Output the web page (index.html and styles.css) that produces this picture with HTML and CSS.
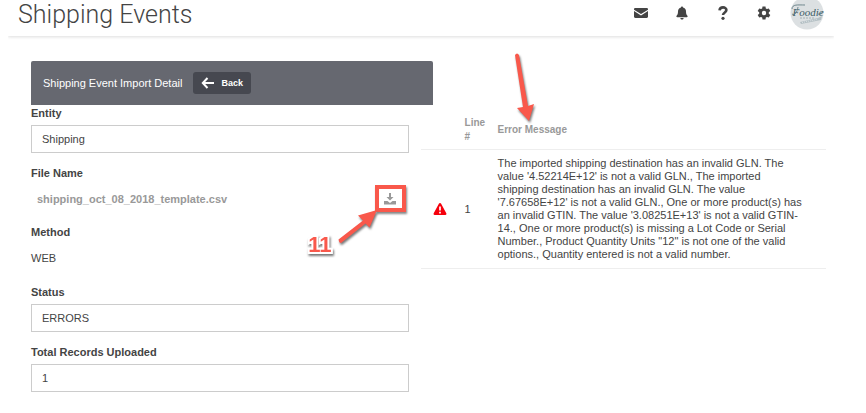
FILE: index.html
```html
<!DOCTYPE html>
<html lang="en">
  <head>
    <meta charset="UTF-8">
    <title>Shipping Events</title>
    <link rel="stylesheet" href="styles.css">
  </head>
  <body>
    <header class="topbar">
      <h1>Shipping Events</h1>
      <nav class="tools">
        <a href="#messages" aria-label="Messages">
          <svg width="14" height="14" viewBox="0 0 14 14"><path d="M1.4 2h11.2C13.4 2 14 2.5 14 3.2v.5L7 8.1 0 3.7v-.5C0 2.5.6 2 1.4 2zM0 5.1l7 4.4 7-4.4v5.700c0 .7-.6 1.2-1.4 1.2H1.400C.6 12 0 11.500 0 10.800z"/></svg>
        </a>
        <a href="#alerts" aria-label="Alerts">
          <svg width="14" height="14" viewBox="0 0 14 14"><path d="M7 .5c.6 0 1 .4 1 1 2 .5 3 2 3 4 0 2.400.6 3.400 1.400 4.200.5.600.2 1.500-.7 1.500H2.300c-.9 0-1.200-.9-.7-1.500C2.400 8.900 3 7.900 3 5.500c0-2 1-3.500 3-4 0-.6.4-1 1-1zM5.400 12h3.200c0 .9-.7 1.600-1.600 1.600S5.400 12.900 5.400 12z"/></svg>
        </a>
        <a href="#help" aria-label="Help">
          <svg width="14" height="14" viewBox="0 0 14 14"><path d="M3.500 4.400C3.800 2.200 5 1.400 7 1.400c2 0 3.400 1.100 3.400 2.700 0 2.400-3.200 2.300-3.400 4.900" fill="none" stroke="#444" stroke-width="2.600"/><circle cx="7" cy="12.300" r="1.600"/></svg>
        </a>
        <a href="#settings" aria-label="Settings">
          <svg width="14" height="14" viewBox="0 0 14 14"><path fill-rule="evenodd" d="M5.500.5h3l.3 1.900 1.200.7 1.800-.7 1.500 2.600-1.500 1.200v1.600l1.500 1.200-1.500 2.600-1.800-.7-1.200.7-.3 1.900h-3l-.3-1.900-1.200-.7-1.800.7L.7 9l1.500-1.200V6.200L.7 5l1.500-2.600 1.800.7 1.200-.7zM7 4.800a2.200 2.200 0 1 0 0 4.400 2.200 2.200 0 0 0 0-4.400z"/></svg>
        </a>
        <a href="#profile" class="avatar" aria-label="Profile">
          <svg width="34" height="34" viewBox="0 0 34 34">
            <circle cx="17" cy="17" r="16.500" fill="#dce0e2"/>
            <text class="logo-text" x="18" y="20" text-anchor="middle">Foodie</text>
            <path d="M2 13c0-5 6-4 13-4M2 18c3 2 5-2 6-7M28 18c2 1 4-1 5-3" fill="none" stroke="#557178" stroke-width=".8"/>
            <path d="M10 22h14" stroke="#98a6aa" stroke-width=".8" stroke-dasharray="2 1"/>
            <path d="M10 26l18-4 4-2-1 4-20 4z" fill="#b3bfc4"/>
            <path d="M12 26.500l15-3" stroke="#e8ecee" stroke-width=".8" stroke-dasharray="1 1"/>
          </svg>
        </a>
      </nav>
    </header>

    <main class="content">
      <section class="detail">
        <div class="panel-head">
          <h2>Shipping Event Import Detail</h2>
          <button type="button" class="back">
            <svg width="14" height="12" viewBox="0 0 14 12"><path d="M6.500 1L1.800 6l4.700 5M2 6h11" fill="none" stroke="#fff" stroke-width="2"/></svg>
            Back
          </button>
        </div>
        <form class="fields">
          <div class="field">
            <label for="entity">Entity</label>
            <input type="text" id="entity" value="Shipping">
          </div>
          <div class="field">
            <span class="label">File Name</span>
            <div class="plain file">
              <a href="#file">shipping_oct_08_2018_template.csv</a>
              <div class="download">
                <a href="#download" aria-label="Download">
                  <svg width="12" height="12" viewBox="0 0 12 12"><path d="M5 0h2v4h2.500L6 7.500 2.500 4H5zM0 8h3.500L6 10l2.500-2H12v3.500H0z" fill="#999"/></svg>
                </a>
                <svg class="callout-arrow" width="46" height="42" viewBox="0 0 46 42"><path d="M5.500 33.500L30 14.500l-5-5L44 4l-7.500 17.500-4-4L8 37q-2 0-2.500-3.500z"/></svg>
                <span class="callout-number">11</span>
              </div>
            </div>
          </div>
          <div class="field">
            <span class="label">Method</span>
            <div class="plain">WEB</div>
          </div>
          <div class="field">
            <label for="status">Status</label>
            <input type="text" id="status" value="ERRORS">
          </div>
          <div class="field">
            <label for="total">Total Records Uploaded</label>
            <input type="text" id="total" value="1">
          </div>
        </form>
      </section>

      <section class="errors">
        <table>
          <thead>
            <tr>
              <th class="icon-col"></th>
              <th class="line-col">Line #</th>
              <th class="message">
                Error Message
                <svg class="message-arrow" width="26" height="74" viewBox="0 0 26 74"><path d="M3 4q2-3 4 0l9 51 6-2-5 17L5 57l6-1z"/></svg>
              </th>
            </tr>
          </thead>
          <tbody>
            <tr>
              <td class="icon-col">
                <svg width="14" height="12" viewBox="0 0 14 12"><path d="M7 0c.5 0 .8.2 1 .6l5.300 9.700c.4.800 0 1.700-.9 1.700H1.600c-.9 0-1.300-.9-.9-1.700L6 .6c.2-.4.5-.6 1-.6z" fill="#f5000c"/><path d="M7 3.500v4M7 8.700v1.700" stroke="#fff" stroke-width="1.700"/></svg>
              </td>
              <td class="line-col">1</td>
              <td class="message">The imported shipping destination has an invalid GLN. The value '4.52214E+12' is not a valid GLN., The imported shipping destination has an invalid GLN. The value '7.67658E+12' is not a valid GLN., One or more product(s) has an invalid GTIN. The value '3.08251E+13' is not a valid GTIN-14., One or more product(s) is missing a Lot Code or Serial Number., Product Quantity Units "12" is not one of the valid options., Quantity entered is not a valid number.</td>
            </tr>
          </tbody>
        </table>
      </section>
    </main>
  </body>
</html>
```
FILE: styles.css
```css
* {
  box-sizing: border-box;
}

body {
  margin: 0 32px 0 8px;
  font-family: "Liberation Sans", Arial, sans-serif;
  font-size: 11px;
  color: #444;
  background: #fff;
}

h1, h2 {
  margin: 0;
  font-weight: normal;
}

a {
  color: #999;
  text-decoration: none;
}

svg {
  display: block;
}

.topbar {
  display: flex;
  justify-content: space-between;
  align-items: center;
  height: 36px;
  padding: 0 10px;
  box-shadow: 0 1px 3px #ddd;
}

h1 {
  font-family: Roboto, "Liberation Sans", sans-serif;
  font-size: 25px;
  font-weight: 300;
  line-height: 28px;
  padding-bottom: 6px;
}

.tools {
  display: flex;
  align-items: center;
  gap: 27px;
  padding-bottom: 10px;
  fill: #444;
}

.avatar {
  margin-left: -8px;
}

.logo-text {
  font-family: "Liberation Serif", serif;
  font-size: 11px;
  font-style: italic;
  fill: #3d5d66;
}

.content {
  display: flex;
  align-items: flex-start;
  padding: 25px 8px 20px 23px;
}

.detail {
  flex: 1;
}

.panel-head {
  display: flex;
  align-items: center;
  gap: 11px;
  height: 44px;
  margin-right: -12px;
  padding: 0 12px;
  border-radius: 2px 2px 0 0;
  background: #666870;
  color: #fff;
}

h2 {
  font-size: 11px;
}

.back {
  display: flex;
  align-items: center;
  gap: 6px;
  height: 22px;
  padding: 0 8px;
  border: 0;
  border-radius: 3px;
  background: #464850;
  color: #fff;
  font: bold 9px "Liberation Sans", Arial, sans-serif;
}

.fields {
  display: flex;
  flex-direction: column;
  gap: 12px;
  margin-right: 12px;
}

.field {
  display: flex;
  flex-direction: column;
  gap: 4px;
}

label, .label {
  font-weight: bold;
  line-height: 16px;
}

input {
  width: 100%;
  height: 28px;
  padding: 0 10px;
  border: 1px solid #ccc;
  font: inherit;
  color: inherit;
}

.plain {
  display: flex;
  align-items: center;
  height: 28px;
}

.file {
  justify-content: space-between;
  height: 27px;
  padding: 0 3px 0 6px;
  font-weight: bold;
}

.download {
  position: relative;
  display: flex;
  justify-content: center;
  width: 31px;
  padding: 4px 0 3px;
  border: 4px solid #f9584b;
  box-shadow: 1px 2px 2px #888;
}

.callout-arrow,
.message-arrow {
  position: absolute;
  fill: #f9584b;
  filter: drop-shadow(1px 2px 1px #777);
}

.callout-arrow {
  top: 17px;
  right: 23px;
}

.callout-number {
  position: absolute;
  top: 43px;
  right: 70px;
  font-size: 22px;
  line-height: 26px;
  color: #f9584b;
  -webkit-text-stroke: 4px #fff;
  paint-order: stroke fill;
  filter: drop-shadow(1px 2px 1px #777);
}

.errors {
  flex: 0 0 51%;
  padding-top: 50px;
}

table {
  width: 100%;
  border-collapse: collapse;
}

th, td {
  padding: 7px 8px;
  border-bottom: 1px solid #eee;
  line-height: 13px;
  text-align: left;
}

th {
  padding: 5px 8px;
  font-size: 10px;
  line-height: 14px;
  color: #999;
}

.icon-col {
  width: 36px;
  padding-left: 12px;
}

.line-col {
  width: 33px;
  padding-right: 4px;
}

.message {
  position: relative;
  padding-right: 22px;
}

.message-arrow {
  bottom: 24px;
  left: 22px;
}
```
